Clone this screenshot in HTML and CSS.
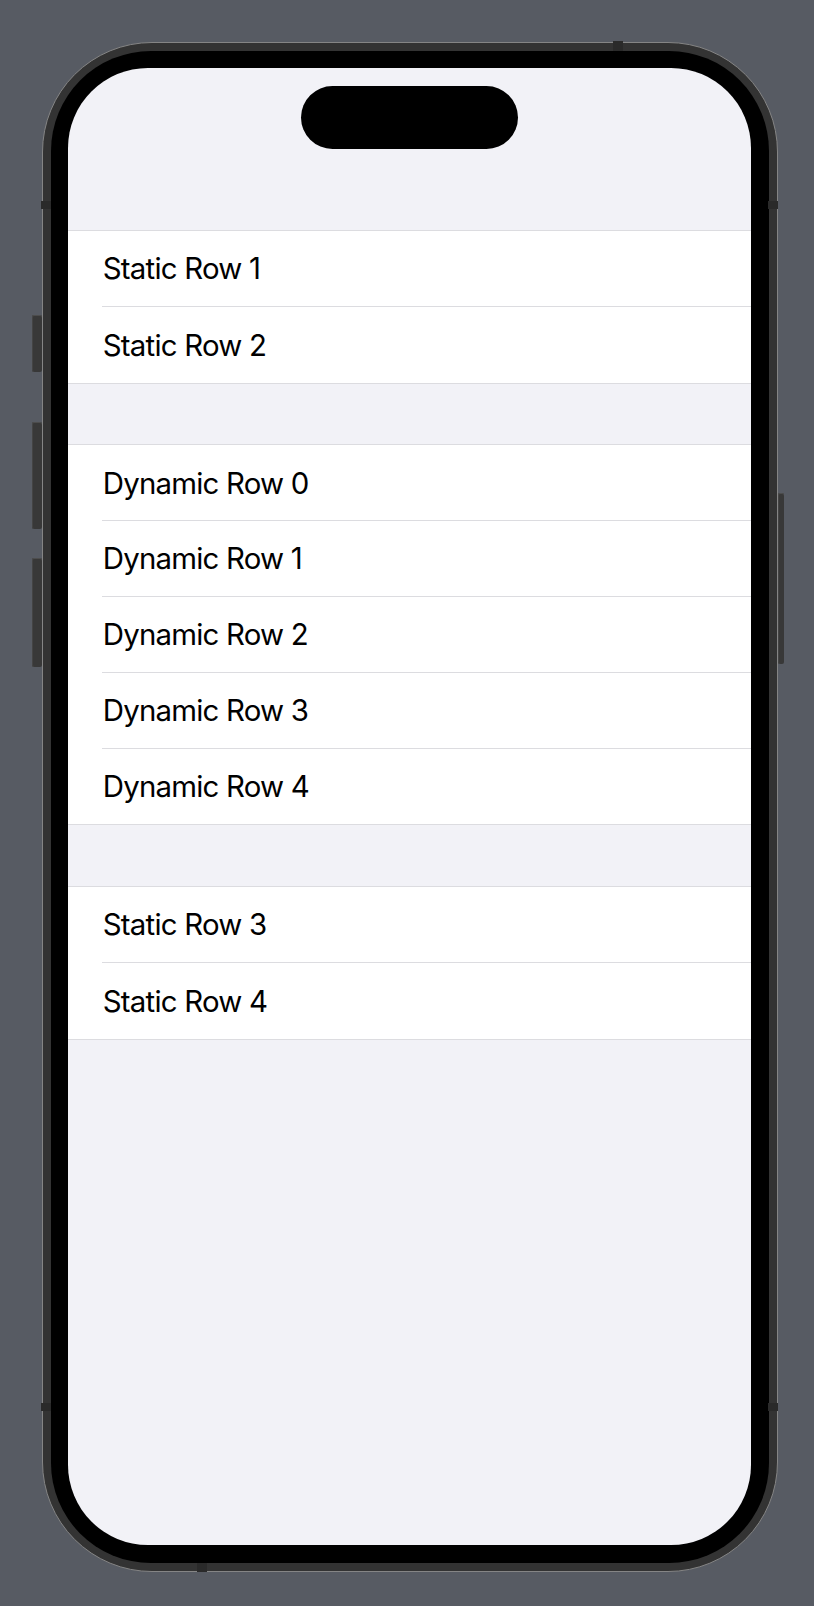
FILE: index.html
```html
<!DOCTYPE html>
<html lang="en">
<head>
<meta charset="utf-8">
<title>List</title>
<link rel="stylesheet" href="styles.css">
</head>
<body>
<div class="stage">
  <div class="rail rail-left">
    <span class="btn btn-action"></span>
    <span class="btn btn-vol-up"></span>
    <span class="btn btn-vol-down"></span>
  </div>
  <div class="phone">
    <div class="bezel">
      <div class="screen">
        <div class="island"></div>
        <div class="list">
          <section class="group">
            <div class="row"><div class="row-inner"><span class="label">Static Row 1</span></div></div>
            <div class="row"><div class="row-inner"><span class="label">Static Row 2</span></div></div>
          </section>
          <section class="group">
            <div class="row"><div class="row-inner"><span class="label">Dynamic Row 0</span></div></div>
            <div class="row"><div class="row-inner"><span class="label">Dynamic Row 1</span></div></div>
            <div class="row"><div class="row-inner"><span class="label">Dynamic Row 2</span></div></div>
            <div class="row"><div class="row-inner"><span class="label">Dynamic Row 3</span></div></div>
            <div class="row"><div class="row-inner"><span class="label">Dynamic Row 4</span></div></div>
          </section>
          <section class="group">
            <div class="row"><div class="row-inner"><span class="label">Static Row 3</span></div></div>
            <div class="row"><div class="row-inner"><span class="label">Static Row 4</span></div></div>
          </section>
        </div>
      </div>
    </div>
    <span class="antenna antenna-left-top"></span>
    <span class="antenna antenna-right-top"></span>
    <span class="antenna antenna-left-bottom"></span>
    <span class="antenna antenna-right-bottom"></span>
    <span class="antenna antenna-top"></span>
    <span class="antenna antenna-bottom"></span>
  </div>
  <div class="rail rail-right">
    <span class="btn btn-power"></span>
  </div>
</div>
</body>
</html>
```
FILE: styles.css
```css
html, body {
  margin: 0;
  padding: 0;
}

body {
  width: 814px;
  height: 1606px;
  overflow: hidden;
  background: #575b63;
  font-family: "Inter", "Noto Sans", sans-serif;
}

.stage {
  display: flex;
  align-items: flex-start;
  padding: 41.7px 0 0 32.3px;
}

.rail {
  display: flex;
  flex-direction: column;
  flex: none;
}

.rail-left {
  width: 9.5px;
}

.rail-right {
  width: 6px;
}

.btn {
  display: block;
  background: #383838;
  border-radius: 2px;
  box-shadow: inset 0 1px 0 #4d4d4d, inset 1px 0 0 #444;
}

.btn-action {
  margin-top: 273.3px;
  height: 57px;
}

.btn-vol-up {
  margin-top: 49.7px;
  height: 107.6px;
}

.btn-vol-down {
  margin-top: 28.7px;
  height: 108.7px;
}

.btn-power {
  margin-top: 451.3px;
  height: 171px;
}

.phone {
  position: relative;
  flex: none;
  box-sizing: border-box;
  width: 736px;
  height: 1530px;
  margin-left: -0.3px;
  padding: 8px;
  border: 1.5px solid #858585;
  border-radius: 110px;
  background: #333333;
}

.bezel {
  box-sizing: border-box;
  height: 100%;
  padding: 17.3px;
  border-radius: 100px;
  background: #000;
}

.screen {
  display: flex;
  flex-direction: column;
  height: 100%;
  overflow: hidden;
  border-radius: 80px;
  background: #f2f2f7;
}

.island {
  flex: none;
  width: 216.6px;
  height: 63.3px;
  margin: 18.2px auto 0;
  border-radius: 32px;
  background: #000;
}

.list {
  display: flex;
  flex-direction: column;
  gap: 60.8px;
  margin-top: 80.5px;
}

.group {
  background: #fff;
  border-top: 1px solid #dcdce0;
  border-bottom: 1px solid #dcdce0;
}

.row {
  padding-left: 34px;
}

.row-inner {
  box-sizing: border-box;
  display: flex;
  align-items: center;
  height: 75.8px;
  padding-top: 0.8px;
  border-bottom: 1px solid #dcdce0;
}

.row:last-child .row-inner {
  border-bottom: none;
}

.label {
  margin-left: 1px;
  font-size: 29.4px;
  letter-spacing: -0.78px;
  color: #000;
}

.antenna {
  position: absolute;
  background: #2a2a2a;
}

.antenna-left-top,
.antenna-left-bottom {
  left: -1.5px;
  width: 10px;
  height: 8px;
}

.antenna-right-top,
.antenna-right-bottom {
  right: -1.5px;
  width: 10px;
  height: 8px;
}

.antenna-left-top,
.antenna-right-top {
  top: 158.8px;
}

.antenna-left-bottom,
.antenna-right-bottom {
  top: 1360px;
}

.antenna-top {
  top: -1.5px;
  left: 570px;
  width: 10px;
  height: 9.5px;
}

.antenna-bottom {
  bottom: -1.5px;
  left: 154px;
  width: 10px;
  height: 9.5px;
}
```
